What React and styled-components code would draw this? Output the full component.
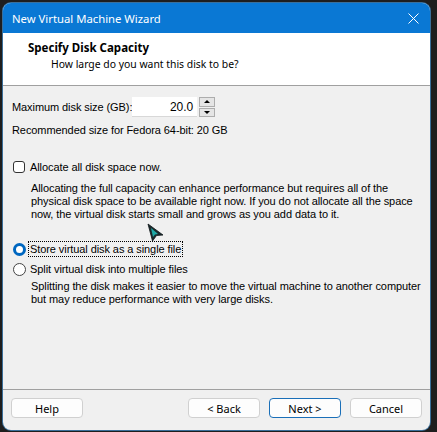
import styled, { createGlobalStyle } from "styled-components";

const GlobalStyle = createGlobalStyle`
  html, body {
    margin: 0;
    padding: 0;
    background: #1e1e1e;
  }
  body {
    font-family: "Liberation Sans", Arial, sans-serif;
  }
`;

const Screen = styled.div`
  width: 437px;
  height: 432px;
  padding: 3px 7px 2px 3px;
  box-sizing: border-box;
  position: relative;
`;

const Window = styled.div`
  width: 427px;
  height: 427px;
  display: flex;
  flex-direction: column;
  border-radius: 8px;
  overflow: hidden;
  background: #f0f0f0;
  box-shadow: 0 0 0 1px #3a6f9a;
`;

const TitleBar = styled.div`
  height: 30px;
  flex: none;
  background: #0a78d4;
  color: #fff;
  display: flex;
  align-items: center;
  justify-content: space-between;
  padding: 0 9px 0 9px;
  font-family: "Noto Sans", sans-serif;
  font-size: 11.3px;
`;

const CloseIcon = styled.svg`
  width: 11px;
  height: 11px;
  margin-right: 2px;
`;

const Header = styled.div`
  height: 53px;
  flex: none;
  background: #fff;
  border-bottom: 1px solid #a0a0a0;
  box-sizing: border-box;
  padding: 7px 0 0 25px;
  font-family: "Noto Sans", sans-serif;
  color: #000;
`;

const HeaderTitle = styled.div`
  font-weight: 700;
  font-size: 11.5px;
  line-height: 16px;
`;

const HeaderSub = styled.div`
  padding-left: 23px;
  font-size: 10.4px;
  line-height: 16px;
`;

const Body = styled.div`
  flex: 1;
  padding: 11px 9px 0 9px;
  font-size: 11px;
  letter-spacing: -0.08px;
  color: #000;
  display: flex;
  flex-direction: column;
  white-space: nowrap;
`;

const SizeRow = styled.div`
  display: flex;
  align-items: center;
  height: 20px;
`;

const Label = styled.span`
  flex: none;
  width: 120px;
  line-height: 13px;
`;

const NumberBox = styled.div`
  width: 65px;
  height: 20px;
  box-sizing: border-box;
  background: #fff;
  border-bottom: 1px solid #d8d8d8;
  text-align: right;
  padding-right: 4px;
  line-height: 20px;
  font-size: 12px;
`;

const Spinner = styled.div`
  margin-left: 2px;
  width: 16px;
  height: 20px;
  display: flex;
  flex-direction: column;
  gap: 1px;
`;

const SpinButton = styled.div`
  flex: 1;
  border: 1px solid #adadad;
  background: #e5e5e5;
  display: flex;
  align-items: center;
  justify-content: center;
  &::after {
    content: "";
    border-left: 3px solid transparent;
    border-right: 3px solid transparent;
    ${(p) =>
      p.$down
        ? "border-top: 3px solid #000;"
        : "border-bottom: 3px solid #000;"}
  }
`;

const Text = styled.div`
  line-height: 13px;
  margin-top: ${(p) => p.$mt || 0}px;
`;

const OptionRow = styled.div`
  display: flex;
  align-items: center;
  height: 16px;
  margin-top: ${(p) => p.$mt || 0}px;
  margin-left: 1px;
`;

const CheckBox = styled.span`
  width: 12px;
  height: 12px;
  box-sizing: border-box;
  border: 1px solid #333;
  border-radius: 3px;
  background: #fff;
  margin-right: 3px;
`;

const Radio = styled.span`
  width: 13px;
  height: 13px;
  box-sizing: border-box;
  border-radius: 50%;
  margin-right: 2px;
  background: #fff;
  border: ${(p) => (p.$checked ? "3.5px solid #0067c0" : "1px solid #444")};
`;

const OptionLabel = styled.span`
  line-height: 14px;
  padding: 0 1px;
  border: 1px dotted ${(p) => (p.$focus ? "#000" : "transparent")};
`;

const Description = styled.div`
  padding-left: 19px;
  line-height: 13px;
  margin-top: ${(p) => p.$mt || 0}px;
`;

const Footer = styled.div`
  height: 32px;
  flex: none;
  border-top: 1px solid #a0a0a0;
  display: flex;
  align-items: flex-start;
  padding: 8px 5px 0 8px;
  gap: 9px;
`;

const Button = styled.button`
  width: 72px;
  height: 20px;
  box-sizing: border-box;
  border-radius: 4px;
  border: 1px solid ${(p) => (p.$primary ? "#1a6fb8" : "#d0d0d0")};
  background: #fdfdfd;
  font-family: "Noto Sans", sans-serif;
  font-size: 11px;
  color: #000;
  padding: 0;
  margin-left: ${(p) => p.$ml || 0}px;
`;

const Cursor = styled.svg`
  position: absolute;
  left: 146px;
  top: 222px;
  width: 20px;
  height: 20px;
`;

export default function App() {
  return (
    <>
      <GlobalStyle />
      <Screen>
        <Window>
          <TitleBar>
            <span>New Virtual Machine Wizard</span>
            <CloseIcon viewBox="0 0 11 11">
              <path d="M0.5 0.5 L10.5 10.5 M10.5 0.5 L0.5 10.5" stroke="#fff" strokeWidth="1" />
            </CloseIcon>
          </TitleBar>
          <Header>
            <HeaderTitle>Specify Disk Capacity</HeaderTitle>
            <HeaderSub>How large do you want this disk to be?</HeaderSub>
          </Header>
          <Body>
            <SizeRow>
              <Label>Maximum disk size (GB):</Label>
              <NumberBox>20.0</NumberBox>
              <Spinner>
                <SpinButton />
                <SpinButton $down />
              </Spinner>
            </SizeRow>
            <Text $mt={7}>Recommended size for Fedora 64-bit: 20 GB</Text>
            <OptionRow $mt={22}>
              <CheckBox />
              <OptionLabel>Allocate all disk space now.</OptionLabel>
            </OptionRow>
            <Description $mt={7}>
              Allocating the full capacity can enhance performance but requires all of the
              <br />
              physical disk space to be available right now. If you do not allocate all the space
              <br />
              now, the virtual disk starts small and grows as you add data to it.
            </Description>
            <OptionRow $mt={20}>
              <Radio $checked />
              <OptionLabel $focus>Store virtual disk as a single file</OptionLabel>
            </OptionRow>
            <OptionRow $mt={4}>
              <Radio />
              <OptionLabel>Split virtual disk into multiple files</OptionLabel>
            </OptionRow>
            <Description $mt={3}>
              Splitting the disk makes it easier to move the virtual machine to another computer
              <br />
              but may reduce performance with very large disks.
            </Description>
          </Body>
          <Footer>
            <Button>Help</Button>
            <Button $ml={96}>&lt; Back</Button>
            <Button $primary>Next &gt;</Button>
            <Button>Cancel</Button>
          </Footer>
        </Window>
        <Cursor viewBox="0 0 20 20">
          <path d="M2 2 L17 13 L10.5 13.5 L6.5 19 Z" fill="#1b2b2e" stroke="#0c1416" strokeWidth="0.8" />
          <path d="M5 6 L12 12 L9 12.5 L7 15 Z" fill="#1fa9a6" />
        </Cursor>
      </Screen>
    </>
  );
}
